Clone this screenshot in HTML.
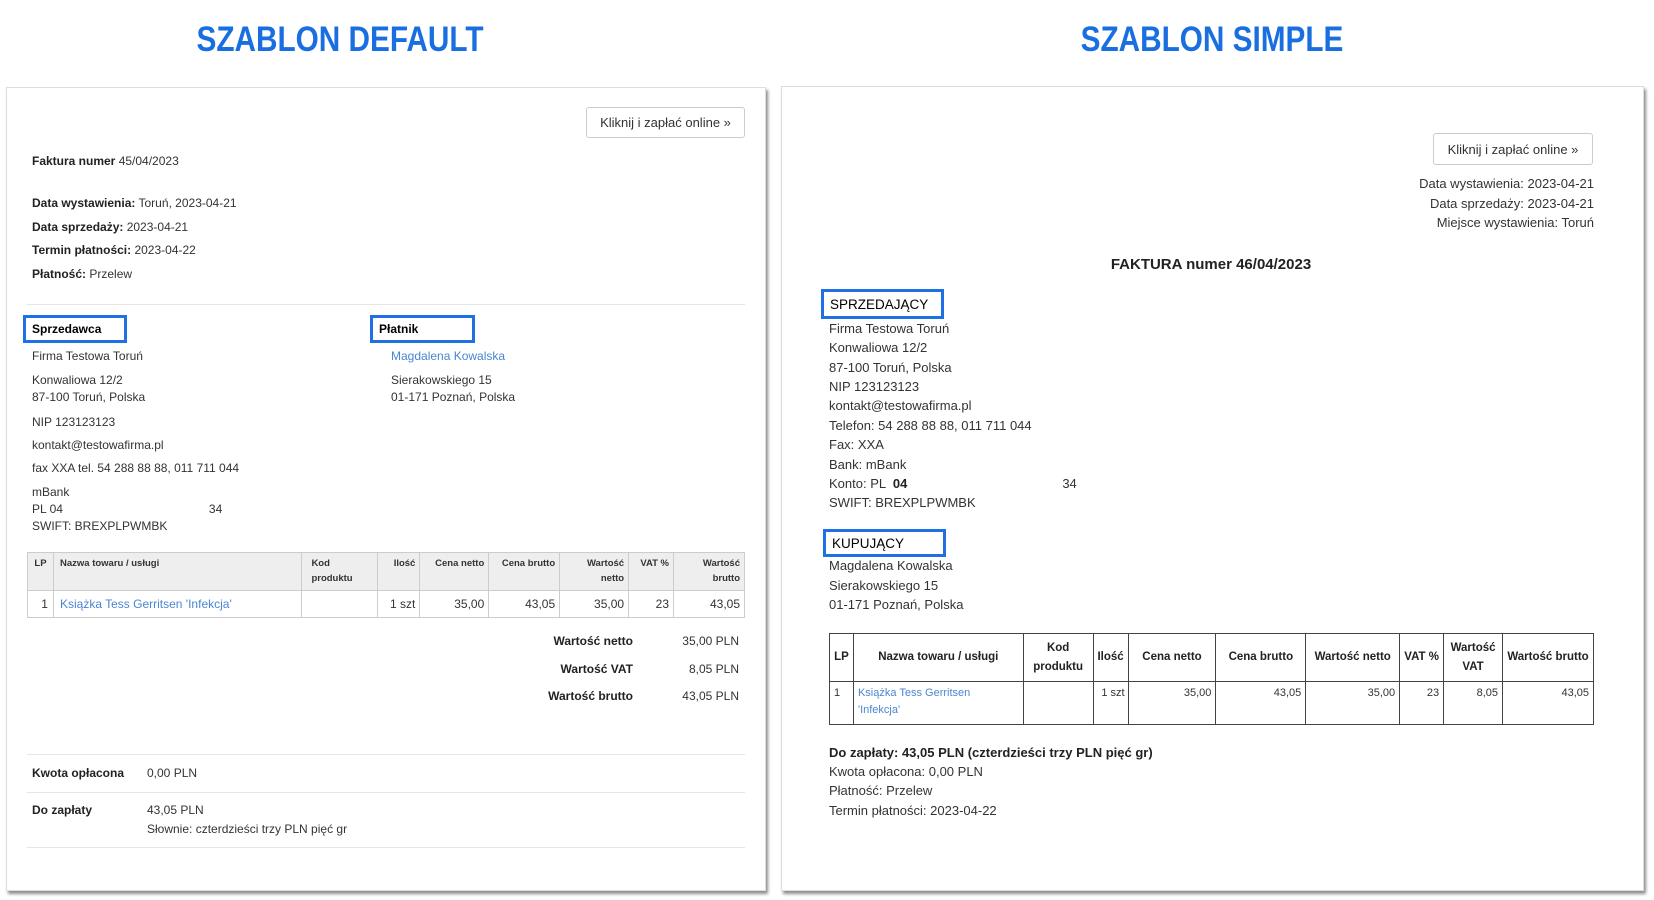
<!DOCTYPE html>
<html><head><meta charset="utf-8"><style>
*{margin:0;padding:0;box-sizing:border-box}
body{width:1654px;height:900px;background:#fff;position:relative;overflow:hidden;font-family:"Liberation Sans",Arial,sans-serif;color:#333}
.a{position:absolute;white-space:nowrap;line-height:16px}
.t{position:absolute;top:22px;font-weight:bold;font-size:35px;color:#1a6fe0;line-height:36px;transform:scaleX(.85);transform-origin:center}
.card{position:absolute;background:#fff;border:1px solid #ddd;box-shadow:2px 3px 3px rgba(0,0,0,.45)}
.btn{position:absolute;border:1px solid #ccc;border-radius:3px;font-size:13px;color:#333;display:flex;align-items:center;justify-content:center}
.box{position:absolute;border:3px solid #1f6fe5;font-weight:bold;color:#000;padding-left:6px;display:flex;align-items:center}
.hr{position:absolute;height:1px;background:#e6e6e6}
.L{font-size:12px}
.R{font-size:13px}
b{color:#222}
.lnk{color:#4a86d0}
table{position:absolute;border-collapse:collapse}
</style></head><body>
<div class="t" style="left:140px;width:400px;text-align:center">SZABLON DEFAULT</div>
<div class="t" style="left:1012px;width:400px;text-align:center">SZABLON SIMPLE</div>

<div class="card" style="left:6px;top:87px;width:760px;height:804px"></div>
<div class="btn" style="left:586px;top:107px;width:159px;height:31px">Kliknij i zapłać online »</div>
<div class="a L" style="left:32px;top:153px"><b>Faktura numer</b> 45/04/2023</div>
<div class="a L" style="left:32px;top:195px"><b>Data wystawienia:</b> Toruń, 2023-04-21</div>
<div class="a L" style="left:32px;top:219px"><b>Data sprzedaży:</b> 2023-04-21</div>
<div class="a L" style="left:32px;top:242px"><b>Termin płatności:</b> 2023-04-22</div>
<div class="a L" style="left:32px;top:266px"><b>Płatność:</b> Przelew</div>
<div class="hr" style="left:27px;top:304px;width:718px"></div>
<div class="box L" style="left:23px;top:315px;width:104px;height:28px">Sprzedawca</div>
<div class="box L" style="left:370px;top:315px;width:105px;height:28px">Płatnik</div>
<div class="a L" style="left:32px;top:348px">Firma Testowa Toruń</div>
<div class="a L" style="left:32px;top:372px">Konwaliowa 12/2</div>
<div class="a L" style="left:32px;top:389px">87-100 Toruń, Polska</div>
<div class="a L" style="left:32px;top:414px">NIP 123123123</div>
<div class="a L" style="left:32px;top:437px">kontakt@testowafirma.pl</div>
<div class="a L" style="left:32px;top:460px">fax XXA tel. 54 288 88 88, 011 711 044</div>
<div class="a L" style="left:32px;top:484px">mBank</div>
<div class="a L" style="left:32px;top:501px">PL 04<span style="margin-left:146px">34</span></div>
<div class="a L" style="left:32px;top:518px">SWIFT: BREXPLPWMBK</div>
<div class="a L lnk" style="left:391px;top:348px">Magdalena Kowalska</div>
<div class="a L" style="left:391px;top:372px">Sierakowskiego 15</div>
<div class="a L" style="left:391px;top:389px">01-171 Poznań, Polska</div>

<table style="left:27px;top:552px;width:718px;font-size:12px;border:1px solid #ccc">
<colgroup><col style="width:26px"><col style="width:249px"><col style="width:76px"><col style="width:42px"><col style="width:69px"><col style="width:71px"><col style="width:69px"><col style="width:45px"><col style="width:71px"></colgroup>
<tr style="height:38px;background:#eee;font-size:9.5px;font-weight:bold;color:#333;vertical-align:top;line-height:15px">
<td style="border:1px solid #ccc;padding:3px 4px;text-align:center">LP</td>
<td style="border:1px solid #ccc;padding:3px 6px">Nazwa towaru / usługi</td>
<td style="border:1px solid #ccc;padding:3px 9px">Kod<br>produktu</td>
<td style="border:1px solid #ccc;padding:3px 4px;text-align:right">Ilość</td>
<td style="border:1px solid #ccc;padding:3px 4px;text-align:right">Cena netto</td>
<td style="border:1px solid #ccc;padding:3px 4px;text-align:right">Cena brutto</td>
<td style="border:1px solid #ccc;padding:3px 4px;text-align:right">Wartość<br>netto</td>
<td style="border:1px solid #ccc;padding:3px 4px;text-align:right">VAT %</td>
<td style="border:1px solid #ccc;padding:3px 4px;text-align:right">Wartość<br>brutto</td></tr>
<tr style="height:27px">
<td style="border:1px solid #ccc;padding:0 5px;text-align:right">1</td>
<td style="border:1px solid #ccc;padding:0 6px" class="lnk">Książka Tess Gerritsen 'Infekcja'</td>
<td style="border:1px solid #ccc"></td>
<td style="border:1px solid #ccc;padding:0 4px;text-align:right">1 szt</td>
<td style="border:1px solid #ccc;padding:0 4px;text-align:right">35,00</td>
<td style="border:1px solid #ccc;padding:0 4px;text-align:right">43,05</td>
<td style="border:1px solid #ccc;padding:0 4px;text-align:right">35,00</td>
<td style="border:1px solid #ccc;padding:0 4px;text-align:right">23</td>
<td style="border:1px solid #ccc;padding:0 4px;text-align:right">43,05</td></tr>
</table>
<div class="a L" style="right:1021px;top:633px"><b>Wartość netto</b></div>
<div class="a L" style="right:915px;top:633px">35,00 PLN</div>
<div class="a L" style="right:1021px;top:661px"><b>Wartość VAT</b></div>
<div class="a L" style="right:915px;top:661px">8,05 PLN</div>
<div class="a L" style="right:1021px;top:688px"><b>Wartość brutto</b></div>
<div class="a L" style="right:915px;top:688px">43,05 PLN</div>
<div class="hr" style="left:27px;top:754px;width:718px"></div>
<div class="a L" style="left:32px;top:765px"><b>Kwota opłacona</b></div>
<div class="a L" style="left:147px;top:765px">0,00 PLN</div>
<div class="hr" style="left:27px;top:792px;width:718px"></div>
<div class="a L" style="left:32px;top:802px"><b>Do zapłaty</b></div>
<div class="a L" style="left:147px;top:802px">43,05 PLN</div>
<div class="a L" style="left:147px;top:821px">Słownie: czterdzieści trzy PLN pięć gr</div>
<div class="hr" style="left:27px;top:847px;width:718px"></div>

<div class="card" style="left:781px;top:86px;width:863px;height:805px"></div>
<div class="btn" style="left:1433px;top:133px;width:160px;height:32px">Kliknij i zapłać online »</div>
<div class="a R" style="right:60px;top:176px">Data wystawienia: 2023-04-21</div>
<div class="a R" style="right:60px;top:196px">Data sprzedaży: 2023-04-21</div>
<div class="a R" style="right:60px;top:215px">Miejsce wystawienia: Toruń</div>
<div class="a" style="left:1011px;width:400px;text-align:center;top:257px;font-size:15px;font-weight:bold;color:#222">FAKTURA numer 46/04/2023</div>
<div class="box R" style="left:821px;top:289px;width:123px;height:30px;font-weight:normal;font-size:13.5px">SPRZEDAJĄCY</div>
<div class="a R" style="left:829px;top:321px">Firma Testowa Toruń</div>
<div class="a R" style="left:829px;top:340px">Konwaliowa 12/2</div>
<div class="a R" style="left:829px;top:360px">87-100 Toruń, Polska</div>
<div class="a R" style="left:829px;top:379px">NIP 123123123</div>
<div class="a R" style="left:829px;top:398px">kontakt@testowafirma.pl</div>
<div class="a R" style="left:829px;top:418px">Telefon: 54 288 88 88, 011 711 044</div>
<div class="a R" style="left:829px;top:437px">Fax: XXA</div>
<div class="a R" style="left:829px;top:457px">Bank: mBank</div>
<div class="a R" style="left:829px;top:476px">Konto: PL &nbsp;<b>04</b><span style="margin-left:155px">34</span></div>
<div class="a R" style="left:829px;top:495px">SWIFT: BREXPLPWMBK</div>
<div class="box R" style="left:823px;top:529px;width:123px;height:28px;font-weight:normal;font-size:13.5px">KUPUJĄCY</div>
<div class="a R" style="left:829px;top:558px">Magdalena Kowalska</div>
<div class="a R" style="left:829px;top:578px">Sierakowskiego 15</div>
<div class="a R" style="left:829px;top:597px">01-171 Poznań, Polska</div>

<table style="left:829px;top:633px;width:765px;font-size:11px;border:1.5px solid #444">
<colgroup><col style="width:24px"><col style="width:170px"><col style="width:70px"><col style="width:35px"><col style="width:88px"><col style="width:90px"><col style="width:94px"><col style="width:44px"><col style="width:59px"><col style="width:91px"></colgroup>
<tr style="height:48px;font-weight:bold;font-size:11.5px;text-align:center;line-height:19px;color:#222">
<td style="border:1.5px solid #444">LP</td><td style="border:1.5px solid #444">Nazwa towaru / usługi</td><td style="border:1.5px solid #444">Kod<br>produktu</td><td style="border:1.5px solid #444">Ilość</td><td style="border:1.5px solid #444">Cena netto</td><td style="border:1.5px solid #444">Cena brutto</td><td style="border:1.5px solid #444">Wartość netto</td><td style="border:1.5px solid #444">VAT %</td><td style="border:1.5px solid #444">Wartość<br>VAT</td><td style="border:1.5px solid #444">Wartość brutto</td></tr>
<tr style="height:43px;vertical-align:top;line-height:17px">
<td style="border:1.5px solid #444;padding:3px 4px">1</td><td style="border:1.5px solid #444;padding:3px 4px" class="lnk">Książka Tess Gerritsen<br>'Infekcja'</td><td style="border:1.5px solid #444"></td><td style="border:1.5px solid #444;padding:3px 3px;text-align:right">1 szt</td><td style="border:1.5px solid #444;padding:3px 4px;text-align:right">35,00</td><td style="border:1.5px solid #444;padding:3px 4px;text-align:right">43,05</td><td style="border:1.5px solid #444;padding:3px 4px;text-align:right">35,00</td><td style="border:1.5px solid #444;padding:3px 4px;text-align:right">23</td><td style="border:1.5px solid #444;padding:3px 4px;text-align:right">8,05</td><td style="border:1.5px solid #444;padding:3px 4px;text-align:right">43,05</td></tr>
</table>
<div class="a R" style="left:829px;top:745px"><b>Do zapłaty: 43,05 PLN (czterdzieści trzy PLN pięć gr)</b></div>
<div class="a R" style="left:829px;top:764px">Kwota opłacona: 0,00 PLN</div>
<div class="a R" style="left:829px;top:783px">Płatność: Przelew</div>
<div class="a R" style="left:829px;top:803px">Termin płatności: 2023-04-22</div>
</body></html>
